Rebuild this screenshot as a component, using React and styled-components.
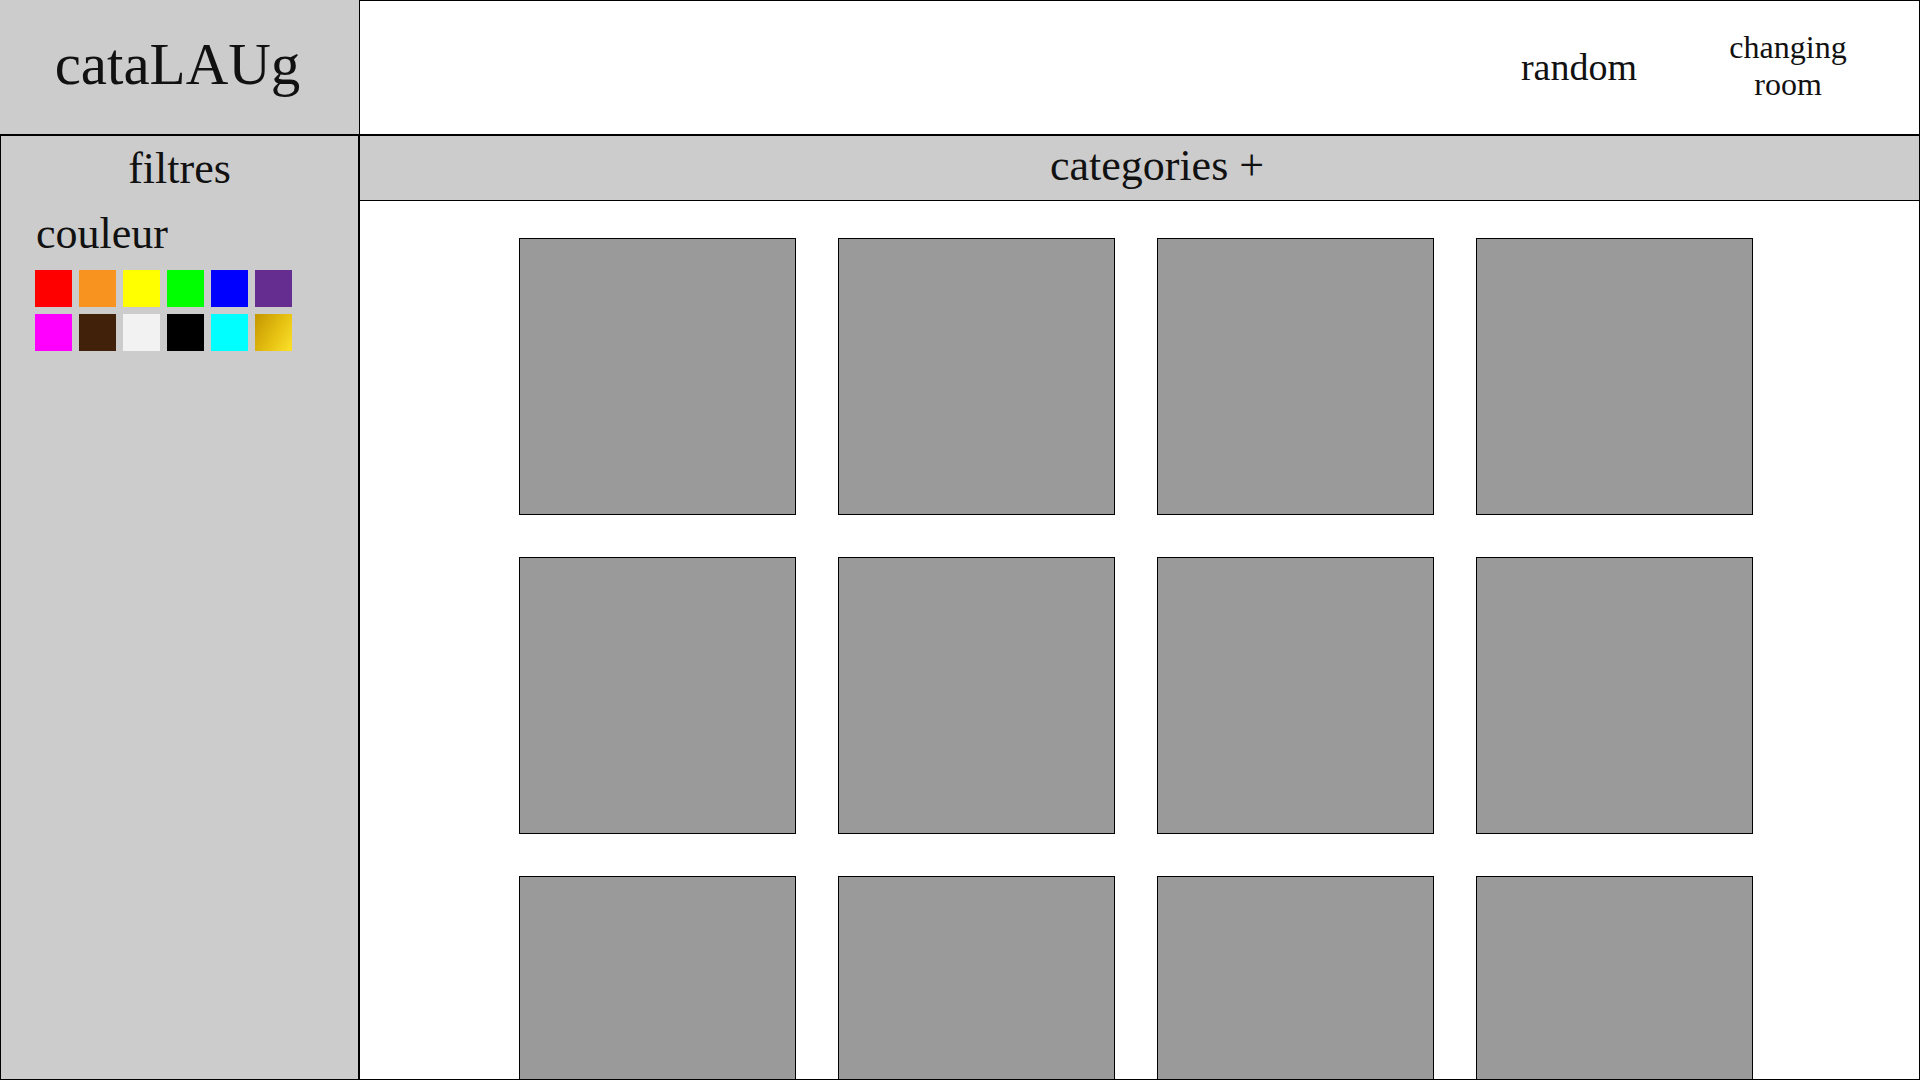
import React from 'react';
import styled, { createGlobalStyle } from 'styled-components';

const GlobalStyle = createGlobalStyle`
  html, body {
    margin: 0;
    padding: 0;
    height: 100%;
    overflow: hidden;
    background: #ffffff;
  }
  body {
    font-family: "Liberation Serif", "Times New Roman", serif;
    color: #111;
  }
  * { box-sizing: border-box; }
`;

const Page = styled.div`
  display: grid;
  grid-template-columns: 359px 1fr;
  grid-template-rows: 135px 1fr;
  width: 100vw;
  height: 100vh;
`;

const Logo = styled.div`
  display: flex;
  align-items: center;
  justify-content: center;
  background: #cccccc;
  border-bottom: 1px solid #000;
  padding: 0 4px 6px 0;
  font-size: 59px;
`;

const TopBar = styled.header`
  display: flex;
  align-items: center;
  justify-content: flex-end;
  gap: 54px;
  padding-right: 56px;
  border: 1px solid #000;
`;

const NavItem = styled.a`
  display: block;
  width: ${p => p.$width}px;
  margin-top: ${p => p.$shift || 0}px;
  text-align: center;
  font-size: ${p => p.$size}px;
  line-height: 1.15;
  color: #111;
  cursor: pointer;
`;

const Sidebar = styled.aside`
  display: flex;
  flex-direction: column;
  background: #cccccc;
  border: 1px solid #000;
  padding: 7px 0 0 35px;
`;

const SideTitle = styled.div`
  font-size: 44px;
  text-align: center;
  margin-left: -35px;
`;

const FilterLabel = styled.div`
  font-size: 44px;
  margin-top: 14px;
`;

const Swatches = styled.div`
  display: grid;
  grid-template-columns: repeat(6, 37px);
  grid-auto-rows: 37px;
  gap: 7px;
  margin: 11px 0 0 -1px;
`;

const Swatch = styled.button`
  border: none;
  padding: 0;
  background: ${p => p.$color};
  cursor: pointer;
`;

const Main = styled.main`
  display: flex;
  flex-direction: column;
  border-left: 1px solid #000;
  border-right: 1px solid #000;
  border-bottom: 1px solid #000;
  overflow: hidden;
  min-height: 0;
`;

const CategoryBar = styled.div`
  display: flex;
  align-items: center;
  justify-content: center;
  height: 66px;
  flex-shrink: 0;
  background: #cccccc;
  border-top: 1px solid #000;
  border-bottom: 1px solid #000;
  padding: 0 0 6px 35px;
  font-size: 44px;
`;

const Grid = styled.div`
  display: grid;
  grid-template-columns: repeat(4, 277px);
  grid-auto-rows: 277px;
  gap: 42px;
  padding: 37px 0 0 159px;
`;

const Tile = styled.div`
  background: #9a9a9a;
  border: 1px solid #000;
`;

const colors = [
  '#ff0000', '#f7931e', '#ffff00', '#00ff00', '#0000ff', '#662d91',
  '#ff00ff', '#42210b', '#f2f2f2', '#000000', '#00ffff',
  'linear-gradient(120deg, #c29600 0%, #e6c012 55%, #fbe22a 100%)',
];

export default function App() {
  return (
    <>
      <GlobalStyle />
      <Page>
        <Logo>cataLAUg</Logo>
        <TopBar>
          <NavItem $width={160} $size={38}>random</NavItem>
          <NavItem $width={150} $size={32} $shift={-4}>changing room</NavItem>
        </TopBar>
        <Sidebar>
          <SideTitle>filtres</SideTitle>
          <FilterLabel>couleur</FilterLabel>
          <Swatches>
            {colors.map((c, i) => <Swatch key={i} $color={c} />)}
          </Swatches>
        </Sidebar>
        <Main>
          <CategoryBar>categories +</CategoryBar>
          <Grid>
            {Array.from({ length: 12 }).map((_, i) => <Tile key={i} />)}
          </Grid>
        </Main>
      </Page>
    </>
  );
}
